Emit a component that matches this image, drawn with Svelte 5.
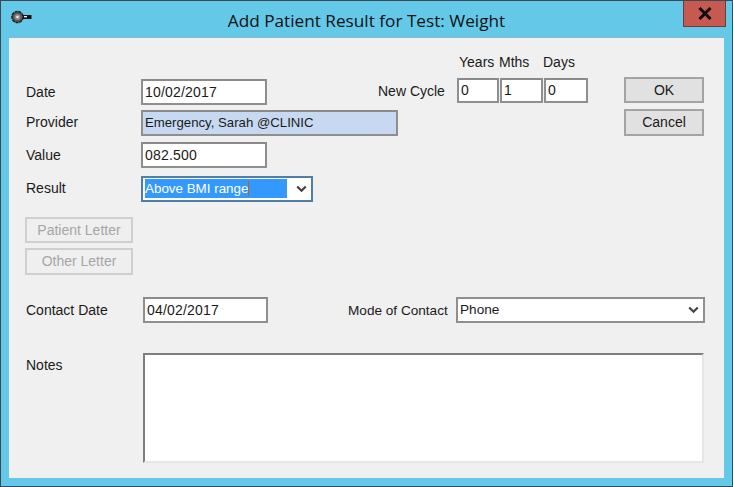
<script>
  const cycle = [
    { name: 'Years', value: '0' },
    { name: 'Mths', value: '1' },
    { name: 'Days', value: '0' }
  ];
</script>

<div class="window">
  <header class="titlebar">
    <svg class="appicon" width="22" height="14" viewBox="0 0 22 14" aria-hidden="true">
      <circle cx="6.5" cy="7" r="5.6" fill="#555" stroke="#1c1c1c" stroke-width="1.4" stroke-dasharray="3 0.8" />
      <circle cx="6.5" cy="7" r="3" fill="#8a8a8a" />
      <circle cx="6.5" cy="7" r="1.3" fill="#e8e8e8" />
      <path d="M12 5h8.5v4H12z" fill="#111" />
      <path d="M13 6h3v1.4h-3z" fill="#eee" />
    </svg>
    <h1 class="title">Add Patient Result for Test: Weight</h1>
    <button class="close" aria-label="Close">
      <svg width="14" height="13" viewBox="0 0 14 13" aria-hidden="true">
        <path d="M1.5 1L12.5 12M12.5 1L1.5 12" stroke="#0c0c0c" stroke-width="3" fill="none" />
      </svg>
    </button>
  </header>

  <main class="client">
    <div class="row cycle-head">
      <span class="cycle-years">Years</span>
      <span class="cycle-mths">Mths</span>
      <span class="cycle-days">Days</span>
    </div>

    <div class="row row-date">
      <label class="label date-label" for="date">Date</label>
      <input id="date" class="field short" readonly value="10/02/2017" />
      <span class="cycle-label">New Cycle</span>
      <div class="cycle">
        {#each cycle as c}
          <input class="field cyc" readonly value={c.value} aria-label={c.name} />
        {/each}
      </div>
      <button class="btn ok">OK</button>
    </div>

    <div class="row row-provider">
      <span class="label raised">Provider</span>
      <input class="field provider" readonly value="Emergency, Sarah @CLINIC" />
      <button class="btn cancel">Cancel</button>
    </div>

    <div class="row row-value">
      <label class="label" for="value">Value</label>
      <input id="value" class="field short" readonly value="082.500" />
    </div>

    <div class="row row-result">
      <span class="label raised">Result</span>
      <div class="combo result">
        <span class="selected"><span class="seltext">Above BMI range</span></span>
        <svg class="chev" width="11" height="8" viewBox="0 0 11 8" aria-hidden="true">
          <path d="M1.2 1.5L5.5 5.8L9.8 1.5" fill="none" stroke="#444" stroke-width="2.2" />
        </svg>
      </div>
    </div>

    <button class="btn letter patient" disabled>Patient Letter</button>
    <button class="btn letter other" disabled>Other Letter</button>

    <div class="row row-contact">
      <label class="label" for="contact">Contact Date</label>
      <input id="contact" class="field contact" readonly value="04/02/2017" />
      <span class="mode-label">Mode of Contact</span>
      <div class="combo mode">
        <span class="phone">Phone</span>
        <svg class="chev" width="11" height="8" viewBox="0 0 11 8" aria-hidden="true">
          <path d="M1.2 1.5L5.5 5.8L9.8 1.5" fill="none" stroke="#444" stroke-width="2.2" />
        </svg>
      </div>
    </div>

    <div class="row row-notes">
      <label class="label" for="notes">Notes</label>
      <textarea id="notes" class="notes" readonly></textarea>
    </div>
  </main>
</div>

<style>
  :global(body) {
    margin: 0;
    background: #64c8e8;
  }
  .window {
    box-sizing: border-box;
    width: 733px;
    height: 487px;
    background: #64c8e8;
    border: 1px solid #3c4a50;
    display: flex;
    flex-direction: column;
    padding: 0 8px 8px;
    font-family: "Liberation Sans", Arial, sans-serif;
    font-size: 14px;
    color: #1a1a1a;
  }
  .titlebar {
    position: relative;
    height: 36px;
    flex: none;
    display: flex;
    align-items: center;
    justify-content: center;
  }
  .appicon {
    position: absolute;
    left: 2px;
    top: 9px;
  }
  .title {
    margin: 2px 0 0 0;
    font-family: "Open Sans", sans-serif;
    font-weight: 400;
    font-size: 17.2px;
    color: #111;
  }
  .close {
    position: absolute;
    right: -2px;
    top: 0;
    width: 43px;
    height: 26px;
    padding: 0;
    display: flex;
    align-items: center;
    justify-content: center;
    background: #c75a50;
    border: 1px solid #6f3d38;
    border-top: 0;
  }
  .client {
    flex: 1;
    background: #f0f0f0;
    display: flex;
    flex-direction: column;
    padding: 14px 0 0 16px;
    box-shadow: inset 0 1px 0 #8fb6c6;
  }
  .row {
    display: flex;
    align-items: center;
  }
  .label {
    box-sizing: border-box;
    width: 116px;
    padding-left: 1px;
    flex: none;
  }
  .date-label {
    margin-top: 4px;
  }
  .raised {
    margin-bottom: 2px;
  }
  .field {
    box-sizing: border-box;
    background: #fff;
    border: 2px solid #8f8f8f;
    border-top-color: #8a8a8a;
    padding: 0 0 0 2px;
    margin: 0;
    font: inherit;
    color: #1a1a1a;
    outline: none;
    height: 26px;
  }
  .short {
    width: 126px;
    letter-spacing: 0.2px;
  }
  .contact {
    width: 125px;
    letter-spacing: 0.2px;
  }
  .cycle-head {
    height: 22px;
    margin-left: 434px;
  }
  .cycle-years { width: 40px; }
  .cycle-mths { width: 44px; }
  .row-date {
    height: 26px;
    margin-top: 4px;
  }
  .row-date .short {
    margin-top: 3px;
  }
  .cycle-label {
    margin-left: 111px;
    margin-top: 2px;
    width: 79px;
  }
  .cycle {
    display: flex;
    gap: 1px;
  }
  .cyc {
    width: 43px;
    height: 25px;
  }
  .cyc:first-child {
    width: 42px;
  }
  .cyc:last-child {
    width: 44px;
  }
  .btn {
    box-sizing: border-box;
    height: 26px;
    padding: 0;
    border: 2px solid #a3a3a3;
    background: #e1e1e1;
    font: inherit;
    color: #1a1a1a;
  }
  .ok {
    width: 80px;
    margin-left: 36px;
  }
  .row-provider {
    margin-top: 6px;
    height: 27px;
  }
  .provider {
    width: 257px;
    background: #c6d9f1;
    height: 26px;
    font-size: 13.2px;
  }
  .cancel {
    width: 80px;
    height: 27px;
    margin-left: 226px;
    padding-bottom: 2px;
  }
  .row-value {
    margin-top: 6px;
    height: 26px;
  }
  .row-result {
    margin-top: 8px;
    height: 26px;
  }
  .combo {
    box-sizing: border-box;
    height: 26px;
    background: #fff;
    border: 2px solid #8f8f8f;
    display: flex;
    align-items: center;
    justify-content: space-between;
    padding: 0 4px 0 2px;
  }
  .result {
    width: 172px;
    border-color: #4f7fa8;
  }
  .selected {
    width: 142px;
    background: #3399ff;
    color: #fff;
    line-height: 19px;
    font-size: 13.4px;
    margin-top: -1px;
  }
  .seltext {
    border-right: 1px solid #b0602a;
  }
  .phone {
    font-size: 13.6px;
    margin-bottom: 2px;
  }
  .letter {
    width: 108px;
    background: #efefef;
    border-color: #cfcfcf;
    color: #a6a6a6;
    flex: none;
  }
  .patient {
    margin-top: 15px;
  }
  .other {
    margin-top: 5px;
    height: 27px;
    padding-bottom: 2px;
  }
  .row-contact {
    margin-top: 22px;
    height: 26px;
  }
  .row-contact .label {
    width: 118px;
  }
  .mode-label {
    margin-left: 80px;
    width: 108px;
    font-size: 13.6px;
  }
  .mode {
    width: 249px;
  }
  .row-notes {
    margin-top: 30px;
    align-items: flex-start;
  }
  .row-notes .label {
    width: 118px;
    margin-top: 4px;
  }
  .notes {
    box-sizing: border-box;
    width: 561px;
    height: 110px;
    margin: 0;
    padding: 0;
    resize: none;
    background: #fff;
    border: 2px solid;
    border-color: #7e7e7e #e6e6e6 #e6e6e6 #7e7e7e;
    outline: none;
  }
</style>
